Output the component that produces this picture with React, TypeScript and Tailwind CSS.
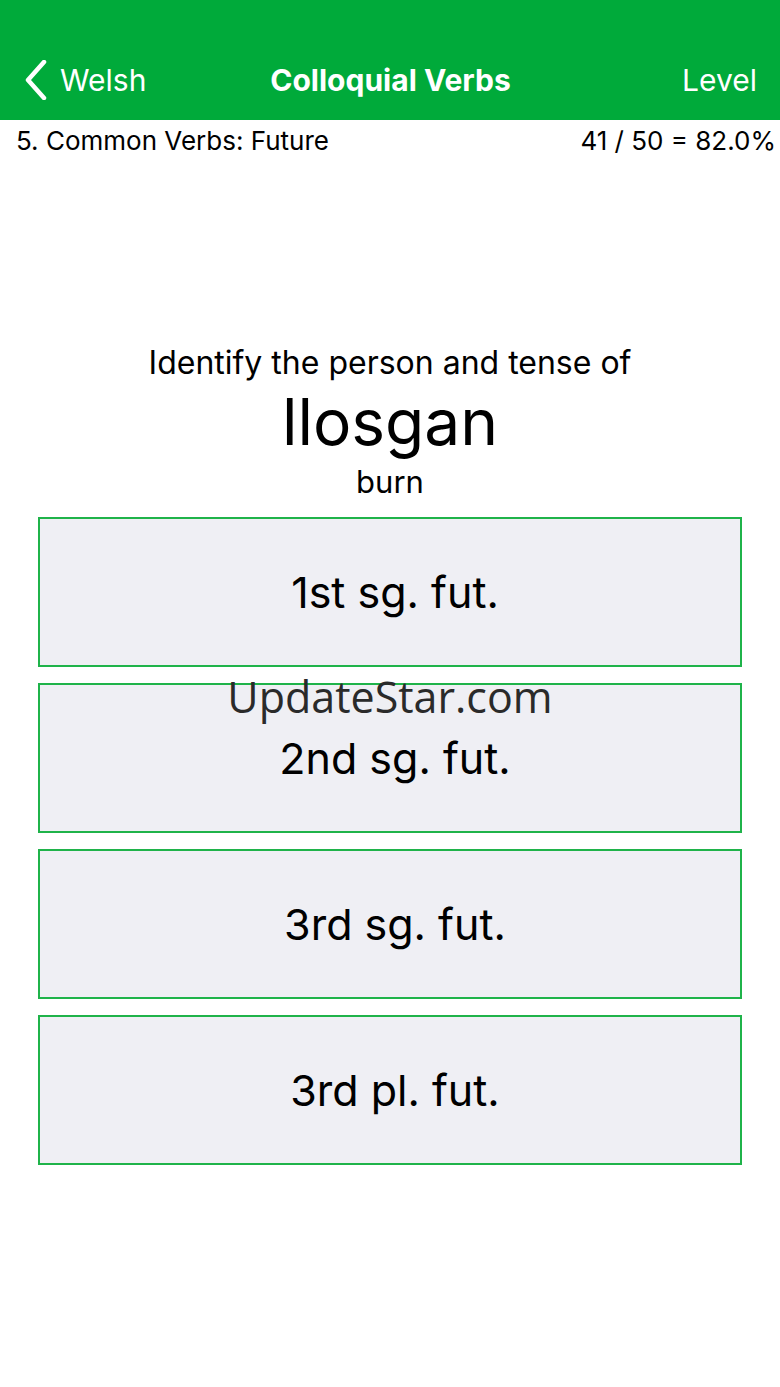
import React from "react";

const options = ["1st sg. fut.", "2nd sg. fut.", "3rd sg. fut.", "3rd pl. fut."];

export default function App() {
  return (
    <div
      className="relative w-[780px] h-[1387px] bg-white text-black overflow-hidden"
      style={{ fontFamily: "Inter, Roboto, 'Liberation Sans', sans-serif" }}
    >
      <div className="h-[120px] bg-[#00aa3a] flex items-center pt-[40px] text-white">
        <div className="flex-1 flex items-center pl-[24px]">
          <svg width="24" height="40" viewBox="0 0 24 40" className="mr-[12px]">
            <path d="M20 2 L4 20 L20 38" stroke="white" strokeWidth="4.5" fill="none" strokeLinecap="round" strokeLinejoin="round" />
          </svg>
          <span className="text-[30px] leading-none">Welsh</span>
        </div>
        <div className="text-[30px] font-bold leading-none">Colloquial Verbs</div>
        <div className="flex-1 flex justify-end pr-[23px]">
          <span className="text-[30px] leading-none">Level</span>
        </div>
      </div>
      <div className="flex justify-between pl-[16px] pr-[4px] pt-[6px] text-[26px] leading-[30px]">
        <span>5. Common Verbs: Future</span>
        <span>41 / 50 = 82.0%</span>
      </div>
      <div className="flex flex-col items-center mt-[188px]">
        <div className="text-[32px] leading-[38px]">Identify the person and tense of</div>
        <div className="text-[64px] leading-[80px]">llosgan</div>
        <div className="text-[31px] leading-[40px]">burn</div>
      </div>
      <div className="flex flex-col gap-[16px] px-[38px] mt-[15px]">
        {options.map((o) => (
          <div
            key={o}
            className="h-[150px] border-2 border-[#1fb34a] bg-[#efeff4] flex items-center justify-center pl-[10px] text-[43px]"
          >
            {o}
          </div>
        ))}
      </div>
      <div
        className="absolute left-0 right-0 top-[665px] text-center text-[43px] text-[#2a2a2a] pointer-events-none"
        style={{ fontFamily: "'Open Sans', 'Noto Sans', sans-serif" }}
      >
        UpdateStar.com
      </div>
    </div>
  );
}
